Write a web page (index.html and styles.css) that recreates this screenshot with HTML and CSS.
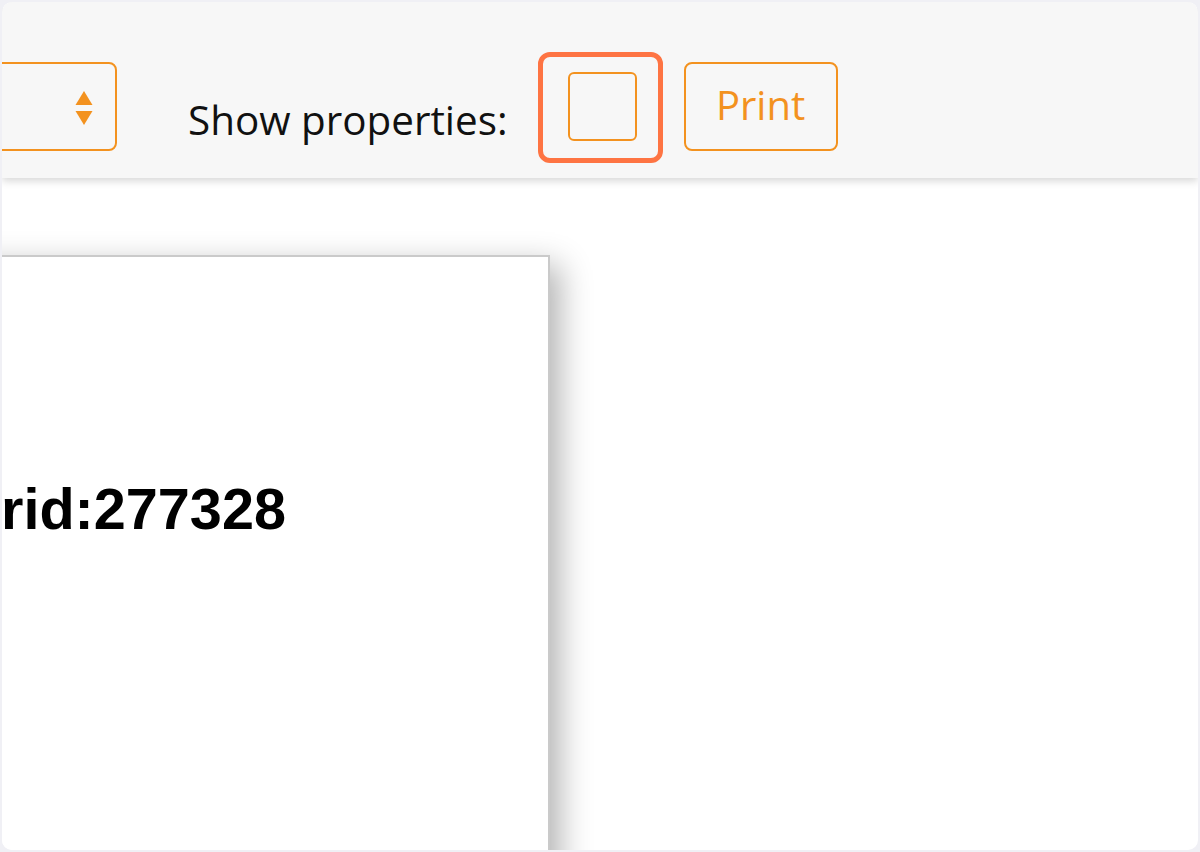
FILE: index.html
```html
<!DOCTYPE html>
<html>
<head>
<meta charset="utf-8">
<link rel="stylesheet" href="styles.css">
</head>
<body>
<div class="frame">
  <div class="toolbar">
    <div class="select">
      <svg class="arrows" width="18" height="36" viewBox="0 0 18 36">
        <path d="M9 0 L17.5 14 L0.5 14 Z" fill="#f3921f"/>
        <path d="M0.5 20 L17.5 20 L9 34 Z" fill="#f3921f"/>
      </svg>
    </div>
    <span class="label">Show properties:</span>
    <div class="highlight">
      <div class="checkbox"></div>
    </div>
    <button class="print">Print</button>
  </div>
  <div class="canvas">
    <div class="paper">
      <div class="title">rid:277328</div>
    </div>
  </div>
</div>
</body>
</html>
```

FILE: styles.css
```css
html, body {
  margin: 0;
  padding: 0;
  background: #f0f0f5;
}
.frame {
  margin: 2px;
  height: 848px;
  border-radius: 10px;
  overflow: hidden;
  background: #ffffff;
  display: flex;
  flex-direction: column;
}
.toolbar {
  height: 126px;
  padding-top: 50px;
  flex: none;
  background: #f7f7f7;
  box-shadow: 0 3px 8px rgba(0, 0, 0, 0.16);
  display: flex;
  align-items: flex-start;
  position: relative;
  z-index: 1;
  font-family: "Open Sans", "Noto Sans", sans-serif;
}
.toolbar > * { flex: none; }
.select {
  margin-top: 10px;
  height: 85px;
  margin-left: -35px;
  border: 2px solid #f3921f;
  border-radius: 8px;
  display: flex;
  align-items: center;
  justify-content: flex-end;
  padding-right: 22px;
  box-sizing: content-box;
  width: 124px;
}
.arrows { display: block; margin-top: 4px; }
.label {
  margin-left: 71px;
  margin-top: 43px;
  font-size: 40.4px;
  line-height: 50px;
  color: #111;
}
.highlight {
  margin-left: 30px;
  border: 5px solid #fe7443;
  border-radius: 12px;
  padding: 15px 21px 17px 25px;
}
.checkbox {
  width: 65px;
  height: 65px;
  border: 2px solid #f3921f;
  border-radius: 6px;
}
.print {
  margin-left: 21px;
  margin-top: 10px;
  width: 154px;
  height: 89px;
  background: transparent;
  border: 2px solid #f3921f;
  border-radius: 8px;
  color: #f3921f;
  font-family: "Open Sans", "Noto Sans", sans-serif;
  font-size: 40px;
  padding: 0 0 4px 0;
}
.canvas {
  flex: 1;
  padding-top: 77px;
  overflow: hidden;
}
.paper {
  margin-left: -100px;
  width: 547px;
  height: 700px;
  padding: 223px 0 0 97px;
  background: #fff;
  border: 2px solid #cacaca;
  box-shadow: 10px 10px 30px rgba(0, 0, 0, 0.3);
}
.title {
  font-family: "Liberation Sans", Arial, sans-serif;
  font-weight: bold;
  font-size: 57.6px;
  line-height: 58px;
  color: #000;
}
```
